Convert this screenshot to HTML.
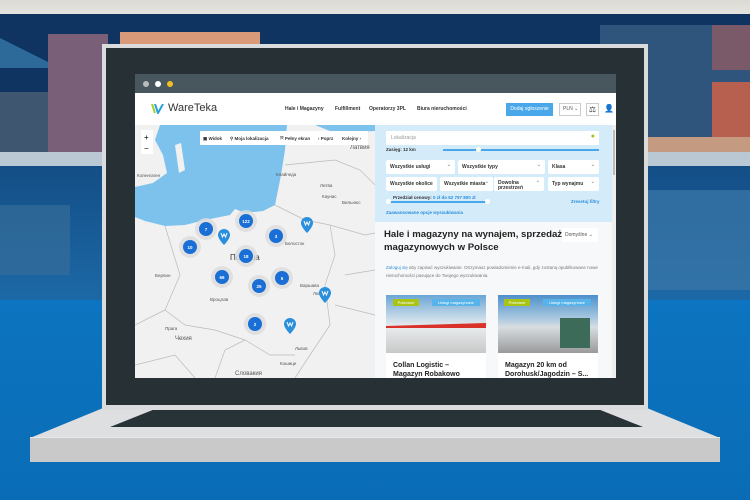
<!DOCTYPE html>
<html><head><meta charset="utf-8"><style>
*{margin:0;padding:0;box-sizing:border-box}
body{width:750px;height:500px;overflow:hidden;position:relative;font-family:"Liberation Sans",sans-serif;background:#0b6fb9}
.a{position:absolute}
.sel{position:absolute;background:#fff;border-radius:2px;font-size:5px;color:#333;padding:4px 4px;font-weight:bold}
.sel:after{content:"⌄";position:absolute;right:4px;top:2px;color:#999}
.t{font-size:5px;color:#333;font-weight:bold}
</style></head><body>
<div class="a" style="left:0;top:0;width:750px;height:16px;background:linear-gradient(#dcdad4,#e6e4df)"></div>
<div class="a" style="left:0;top:14px;width:750px;height:140px;background:#0f3461"></div>
<div class="a" style="left:0;top:92px;width:105px;height:60px;background:#3e5670"></div>
<div class="a" style="left:0;top:38px;width:60px;height:30px;background:#2d6a9a;clip-path:polygon(0 0,100% 100%,0 100%)"></div>
<div class="a" style="left:48px;top:34px;width:60px;height:118px;background:#7a5f78"></div>
<div class="a" style="left:120px;top:32px;width:140px;height:14px;background:#d99a7a"></div>
<div class="a" style="left:600px;top:25px;width:150px;height:112px;background:#2f557c"></div>
<div class="a" style="left:712px;top:25px;width:38px;height:45px;background:#7a5a68"></div>
<div class="a" style="left:712px;top:82px;width:38px;height:55px;background:#b7604f"></div>
<div class="a" style="left:640px;top:137px;width:110px;height:15px;background:#c49a80"></div>
<div class="a" style="left:0;top:152px;width:750px;height:14px;background:#b9c8d2"></div>
<div class="a" style="left:0;top:166px;width:750px;height:140px;background:linear-gradient(#144e86,#1c6aa8)"></div>
<div class="a" style="left:0;top:205px;width:70px;height:70px;background:#3a6f9a;opacity:.6"></div>
<div class="a" style="left:648px;top:190px;width:102px;height:100px;background:#3c77a8;opacity:.7"></div>
<div class="a" style="left:0;top:300px;width:750px;height:200px;background:linear-gradient(#0c74c0,#0a6cb6)"></div>
<div class="a" style="left:30px;top:408px;width:690px;height:30px;background:#dedfe0;clip-path:polygon(10.6% 0,89.4% 0,100% 100%,0 100%)"></div>
<div class="a" style="left:110px;top:410px;width:533px;height:17px;background:#283338;clip-path:polygon(8% 0,92% 0,100% 100%,0 100%)"></div>
<div class="a" style="left:30px;top:437px;width:690px;height:25px;background:#c9c9c9;border-top:1px solid #e8e8e8"></div>
<div class="a" style="left:102px;top:44px;width:546px;height:366px;background:#d9dbdd"></div>
<div class="a" style="left:106px;top:48px;width:538px;height:357px;background:#263035"></div>
<div class="a" style="left:135px;top:74px;width:481px;height:19px;background:#48565d"></div>
<div class="a" style="left:143px;top:81px;width:6px;height:6px;border-radius:50%;background:#b9bcbe"></div>
<div class="a" style="left:155px;top:81px;width:6px;height:6px;border-radius:50%;background:#fff"></div>
<div class="a" style="left:167px;top:81px;width:6px;height:6px;border-radius:50%;background:#f0c020"></div>
<div class="a" style="left:135px;top:93px;width:481px;height:32px;background:#fff"></div>
<svg class="a" style="left:151px;top:104px" width="14" height="10" viewBox="0 0 14 10"><path d="M1 0L4 9" stroke="#9fd22a" stroke-width="2"/><path d="M4 0L7 9L12 0" stroke="#2a9fe0" stroke-width="2" fill="none"/></svg>
<div class="a" style="left:168px;top:102px;font-size:11px;color:#333">WareTeka</div>
<div class="a t" style="left:285px;top:106px">Hale i Magazyny</div>
<div class="a t" style="left:335px;top:106px">Fulfillment</div>
<div class="a t" style="left:369px;top:106px">Operatorzy 3PL</div>
<div class="a t" style="left:417px;top:106px">Biura nieruchomości</div>
<div class="a" style="left:506px;top:103px;width:47px;height:13px;background:#4aa8ea;color:#fff;font-size:5px;text-align:center;line-height:13px">Dodaj ogłoszenie</div>
<div class="a" style="left:559px;top:103px;width:22px;height:13px;border:1px solid #ccc;font-size:5px;line-height:11px;padding-left:3px;color:#555">PLN ⌄</div>
<div class="a" style="left:586px;top:103px;width:13px;height:13px;border:1px solid #ccc;font-size:8px;line-height:11px;text-align:center;color:#444">⚖</div>
<div class="a" style="left:604px;top:104px;font-size:8px;color:#222">👤</div>
<svg class="a" style="left:135px;top:125px" width="240" height="253" viewBox="0 0 240 253">
<rect x="0" y="0" width="240" height="253" fill="#f1f1f1"/>
<path fill="#7cc2ec" d="M25 0 L152 0 L150 25 L146 50 L142 70 L140 80 L128 86 L110 88 L100 84 L95 90 L70 95 L50 100 L30 101 L10 96 L0 92 L0 62 L18 58 L32 48 L28 30 L20 15 Z"/>
<path fill="#7cc2ec" d="M180 0 L240 0 L240 6 L200 8 Z"/>
<path fill="#f1f1f1" d="M40 20 L46 18 L50 45 L44 48 Z"/>
<g fill="none" stroke="#bbb" stroke-width=".7">
<path d="M140,80 L170,95 L195,100 L230,110 L240,108"/>
<path d="M150,40 L200,35 L225,45 L240,60 M195,100 L200,130 L190,160 L195,200 L175,230 L160,253"/>
<path d="M30,101 L45,150 L30,185 L50,200 L80,205 L110,215 L135,230 L160,230"/>
<path d="M0,200 L30,185 M0,240 L40,230 L60,253 M80,253 L90,225 L110,215"/>
<path d="M210,150 L240,145 M200,180 L240,190"/>
</g>
<g font-size="4.5" fill="#555" font-family="Liberation Sans">
<text x="2" y="52">Копенгаген</text><text x="141" y="51">Клайпеда</text><text x="185" y="62">Литва</text><text x="187" y="73">Каунас</text><text x="207" y="79">Вильнюс</text>
<text x="20" y="152">Берлин</text><text x="95" y="135" font-size="8" fill="#333">Польша</text><text x="165" y="162">Варшава</text><text x="75" y="176">Вроцлав</text>
<text x="30" y="205">Прага</text><text x="40" y="215" font-size="6">Чехия</text><text x="160" y="225">Львов</text><text x="100" y="250" font-size="6">Словакия</text><text x="145" y="240">Кошице</text>
<text x="215" y="24" font-size="6">Латвия</text><text x="178" y="170">Люблин</text><text x="150" y="120">Белосток</text>
</g>
<g fill="#ddd" opacity=".8"><circle cx="71" cy="104" r="11"/><circle cx="111" cy="96" r="11"/><circle cx="141" cy="111" r="11"/><circle cx="55" cy="122" r="11"/><circle cx="111" cy="131" r="11"/><circle cx="87" cy="152" r="11"/><circle cx="124" cy="161" r="11"/><circle cx="147" cy="153" r="11"/><circle cx="120" cy="199" r="11"/></g>
<g fill="#1a6fd6"><circle cx="71" cy="104" r="7"/><circle cx="111" cy="96" r="7"/><circle cx="141" cy="111" r="7"/><circle cx="55" cy="122" r="7"/><circle cx="111" cy="131" r="7"/><circle cx="87" cy="152" r="7"/><circle cx="124" cy="161" r="7"/><circle cx="147" cy="153" r="7"/><circle cx="120" cy="199" r="7"/></g>
<g fill="#fff" font-size="4.5" font-weight="bold" text-anchor="middle" font-family="Liberation Sans"><text x="71" y="106">7</text><text x="111" y="98">122</text><text x="141" y="113">3</text><text x="55" y="124">10</text><text x="111" y="133">18</text><text x="87" y="154">66</text><text x="124" y="163">25</text><text x="147" y="155">5</text><text x="120" y="201">2</text></g>
<g fill="#2a8fdc">
<path d="M89 104 a6 6 0 0 1 6 6 c0 4 -6 10 -6 10 c0 0 -6 -6 -6 -10 a6 6 0 0 1 6 -6z"/>
<path d="M172 92 a6 6 0 0 1 6 6 c0 4 -6 10 -6 10 c0 0 -6 -6 -6 -10 a6 6 0 0 1 6 -6z"/>
<path d="M190 162 a6 6 0 0 1 6 6 c0 4 -6 10 -6 10 c0 0 -6 -6 -6 -10 a6 6 0 0 1 6 -6z"/>
<path d="M155 193 a6 6 0 0 1 6 6 c0 4 -6 10 -6 10 c0 0 -6 -6 -6 -10 a6 6 0 0 1 6 -6z"/>
</g>
<g fill="none" stroke="#fff" stroke-width="1"><path d="M86 108l1.5 4l1.5-3l1.5 3l1.5-4"/><path d="M169 96l1.5 4l1.5-3l1.5 3l1.5-4"/><path d="M187 166l1.5 4l1.5-3l1.5 3l1.5-4"/><path d="M152 197l1.5 4l1.5-3l1.5 3l1.5-4"/></g>
<rect x="65" y="6" width="168" height="14" fill="#fff"/>
<g font-size="4.5" fill="#333" font-weight="bold" font-family="Liberation Sans"><text x="68" y="15">▣ Widok</text><text x="95" y="15">⚲ Moja lokalizacja</text><text x="145" y="15">⤧ Pełny ekran</text><text x="183" y="15">‹ Poprz</text><text x="207" y="15">Kolejny ›</text></g>
<rect x="6" y="5" width="12" height="24" fill="#fff"/><text x="9" y="15" font-size="8">+</text><text x="9" y="26" font-size="8">−</text>
</svg>
<div class="a" style="left:375px;top:125px;width:237px;height:253px;background:#f7f8f9"></div>
<div class="a" style="left:375px;top:125px;width:237px;height:97px;background:#d4ebfa"></div>
<div class="a" style="left:612px;top:125px;width:4px;height:253px;background:#eee"></div>
<div class="a" style="left:613px;top:130px;width:2px;height:45px;background:#bbb"></div>
<div class="a" style="left:386px;top:131px;width:213px;height:14px;background:#fff;font-size:5px;color:#999;padding:4px 5px">Lokalizacja<span style="position:absolute;right:4px;top:2px;color:#9fc51a;font-size:7px">●</span></div>
<div class="a t" style="left:386px;top:147px;font-size:4.5px">Zasięg: 12 km</div>
<div class="a" style="left:443px;top:149px;width:156px;height:1.5px;background:#4aa8ea"></div>
<div class="a" style="left:476px;top:147px;width:5px;height:5px;border-radius:50%;background:#fff"></div>
<div class="sel" style="left:386px;top:160px;width:69px;height:14px">Wszystkie usługi</div>
<div class="sel" style="left:458px;top:160px;width:87px;height:14px">Wszystkie typy</div>
<div class="sel" style="left:548px;top:160px;width:51px;height:14px">Klasa</div>
<div class="sel" style="left:386px;top:177px;width:51px;height:14px">Wszystkie okolice</div>
<div class="sel" style="left:440px;top:177px;width:53px;height:14px">Wszystkie miasta</div>
<div class="sel" style="left:494px;top:177px;width:50px;height:14px;line-height:5px">Dowolna przestrzeń</div>
<div class="sel" style="left:548px;top:177px;width:51px;height:14px">Typ wynajmu</div>
<div class="a t" style="left:393px;top:195px;font-size:4.5px">Przedział cenowy: <span style="color:#2a8fdc">0 zł do 62 797 800 zł</span></div>
<div class="a" style="left:389px;top:201px;width:98px;height:1.5px;background:#4aa8ea"></div>
<div class="a" style="left:386px;top:199px;width:5px;height:5px;border-radius:50%;background:#fff"></div>
<div class="a" style="left:485px;top:199px;width:5px;height:5px;border-radius:50%;background:#fff"></div>
<div class="a t" style="left:571px;top:199px;font-size:4.5px;color:#2a8fdc">Zresetuj filtry</div>
<div class="a t" style="left:386px;top:210px;font-size:4.5px;color:#2a8fdc">Zaawansowane opcje wyszukiwania</div>
<div class="a" style="left:384px;top:228px;font-size:9.6px;font-weight:bold;color:#222;line-height:13px;width:190px;white-space:nowrap">Hale i magazyny na wynajem, sprzedaż<br>magazynowych w Polsce</div>
<div class="a" style="left:562px;top:228px;width:36px;height:14px;background:#fff;font-size:5px;color:#555;padding:4px 3px">Domyślne ⌄</div>
<div class="a" style="left:386px;top:264px;font-size:4.5px;color:#777;line-height:8px;width:220px"><span style="color:#2a8fdc">Zaloguj się</span> aby zapisać wyszukiwanie. Otrzymasz powiadomienie e-mail, gdy zostaną opublikowane nowe nieruchomości pasujące do Twojego wyszukiwania.</div>
<div class="a" style="left:386px;top:295px;width:100px;height:83px;background:#fff"></div>
<div class="a" style="left:386px;top:295px;width:100px;height:58px;background:linear-gradient(#6aa6d6 0%,#c9dbe8 40%,#e9ecee 55%,#c8c8c8 100%)"></div>
<div class="a" style="left:386px;top:323px;width:100px;height:5px;background:#d8322a;clip-path:polygon(0 60%,100% 0,100% 100%,0 100%)"></div>
<div class="a" style="left:498px;top:295px;width:100px;height:83px;background:#fff"></div>
<div class="a" style="left:498px;top:295px;width:100px;height:58px;background:linear-gradient(#4d8fcb 0%,#a9c8e0 40%,#d7dde1 55%,#9a9a9a 100%)"></div>
<div class="a" style="left:560px;top:318px;width:30px;height:30px;background:#3c6b5a"></div>
<div class="a" style="left:393px;top:299px;width:26px;height:7px;background:#a9c414;color:#fff;font-size:4px;text-align:center;line-height:7px">Polecane</div>
<div class="a" style="left:432px;top:299px;width:48px;height:7px;background:#56b4ea;color:#fff;font-size:4px;text-align:center;line-height:7px">Usługi magazynowe</div>
<div class="a" style="left:504px;top:299px;width:26px;height:7px;background:#a9c414;color:#fff;font-size:4px;text-align:center;line-height:7px">Polecane</div>
<div class="a" style="left:543px;top:299px;width:48px;height:7px;background:#56b4ea;color:#fff;font-size:4px;text-align:center;line-height:7px">Usługi magazynowe</div>
<div class="a" style="left:393px;top:361px;font-size:7px;font-weight:bold;color:#222;line-height:9px">Collan Logistic –<br>Magazyn Robakowo</div>
<div class="a" style="left:505px;top:361px;font-size:7px;font-weight:bold;color:#222;line-height:9px">Magazyn 20 km od<br>Dorohusk/Jagodzin – S...</div>
</body></html>
